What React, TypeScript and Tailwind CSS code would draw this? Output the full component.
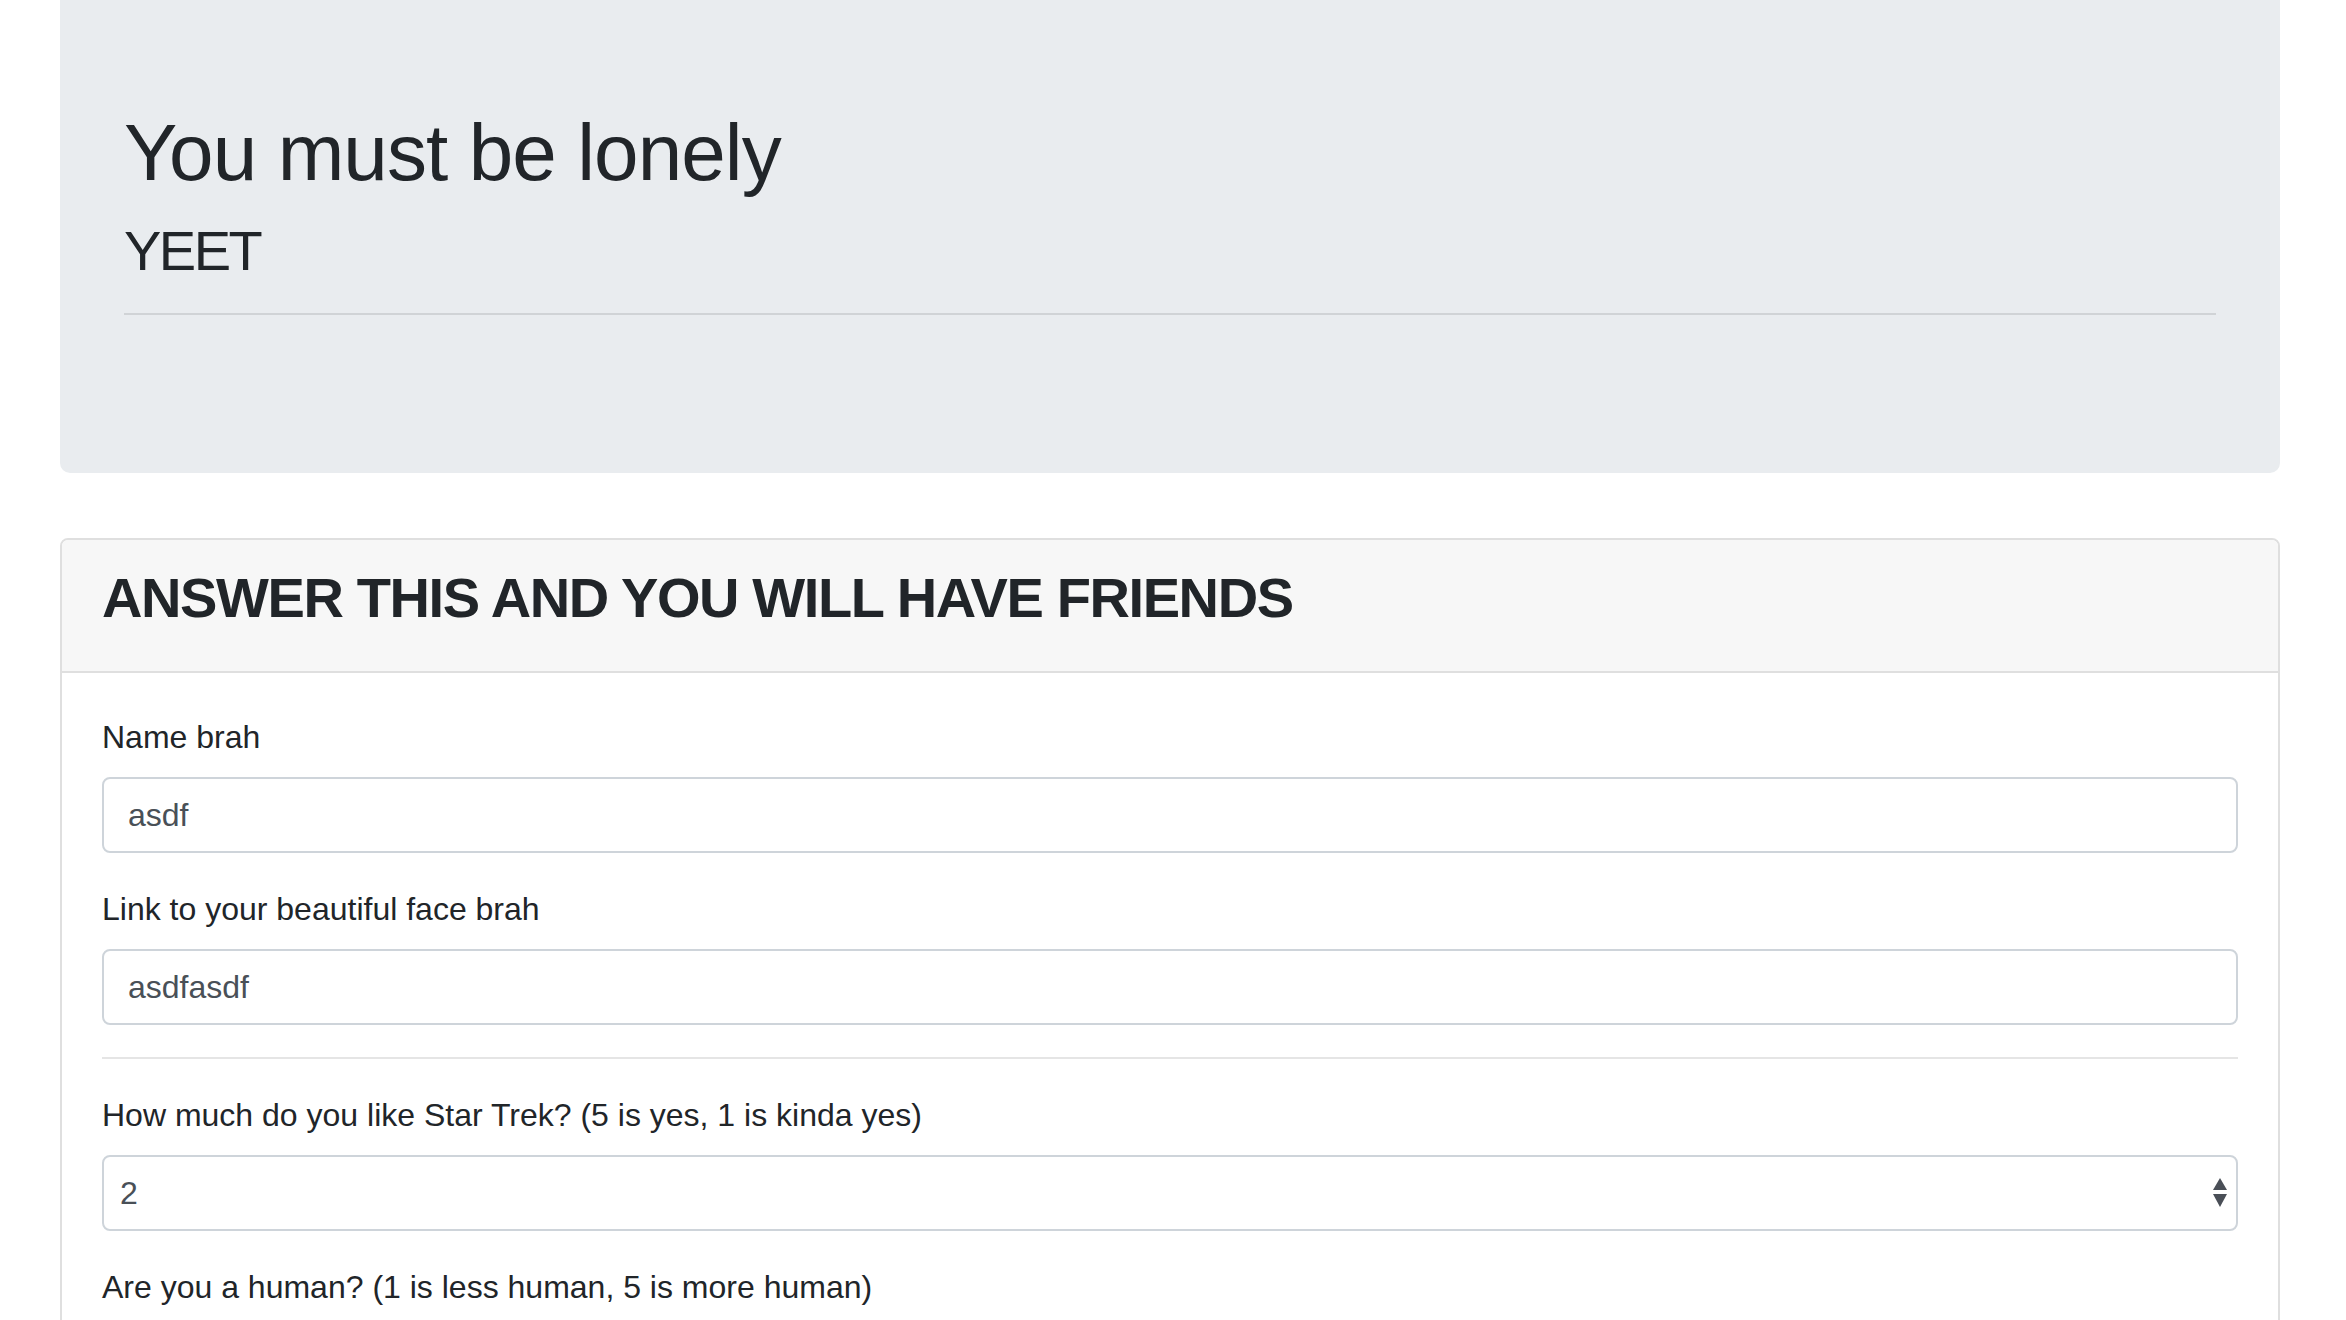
const SelectArrows = () => (
  <svg width="16" height="30" viewBox="0 0 16 30" className="shrink-0">
    <path d="M8 0 L15 12 L1 12 Z" fill="#4a4f57" />
    <path d="M1 16 L15 16 L8 29 Z" fill="#4a4f57" />
  </svg>
);

const Field = ({ label, value }: { label: string; value: string }) => (
  <div className="mb-[32px]">
    <label className="block mb-[16px] text-[32px] leading-[48px] text-[#212529]">{label}</label>
    <div className="h-[76px] border-2 border-[#ced4da] rounded-[8px] bg-white px-[24px] flex items-center text-[32px] text-[#495057]">
      {value}
    </div>
  </div>
);

const App = () => {
  return (
    <div
      className="min-h-screen bg-white pl-[60px] pr-[66px]"
      style={{ fontFamily: '"Liberation Sans", Arial, sans-serif' }}
    >
      {/* jumbotron */}
      <section className="bg-[#e9ecef] rounded-b-[10px] px-[64px] pt-[105px] pb-[158px] text-[#212529]">
        <h1 className="text-[80px] leading-[96px] tracking-[-0.9px] mb-[16px]">You must be lonely</h1>
        <h3 className="text-[56px] leading-[67px] tracking-[-2.5px]">YEET</h3>
        <hr className="mt-[29px] border-0 border-t-2 border-[#d0d3d6]" />
      </section>

      {/* card */}
      <div className="mt-[65px] border-2 border-[#dfdfdf] rounded-[8px] overflow-hidden">
        <div className="bg-[#f7f7f7] border-b-2 border-[#dfdfdf] px-[40px] pt-[24px] pb-[24px]">
          <h3 className="text-[56px] leading-[67px] font-bold tracking-[-1.4px] text-[#212529] mb-[16px]">
            ANSWER THIS AND YOU WILL HAVE FRIENDS
          </h3>
        </div>
        <div className="px-[40px] pt-[40px] pb-[40px]">
          <Field label="Name brah" value="asdf" />
          <Field label="Link to your beautiful face brah" value="asdfasdf" />
          <hr className="border-0 border-t-2 border-[#e5e5e5] mb-[32px]" />
          <div className="mb-[32px]">
            <label className="block mb-[16px] text-[32px] leading-[48px] text-[#212529]">
              How much do you like Star Trek? (5 is yes, 1 is kinda yes)
            </label>
            <div className="h-[76px] border-2 border-[#ced4da] rounded-[8px] bg-white pl-[16px] pr-[8px] flex items-center justify-between text-[32px] text-[#495057]">
              <span>2</span>
              <SelectArrows />
            </div>
          </div>
          <div>
            <label className="block text-[32px] leading-[48px] text-[#212529]">
              Are you a human? (1 is less human, 5 is more human)
            </label>
          </div>
        </div>
      </div>
    </div>
  );
};

export default App;
